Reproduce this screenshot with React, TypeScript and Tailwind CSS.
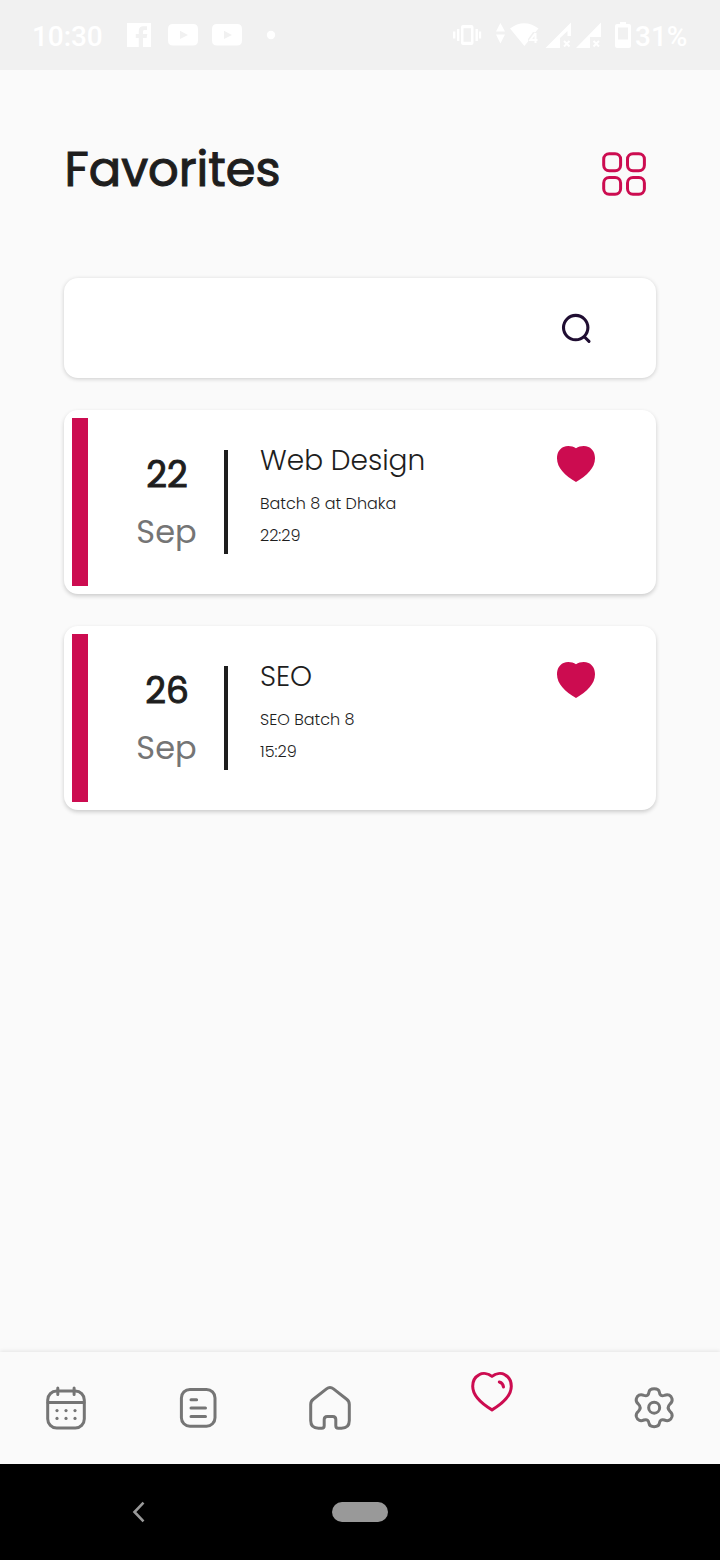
import type { ReactNode } from "react";

type DrawingProps = { box: string; className: string; children: ReactNode };

function Drawing({ box, className, children }: DrawingProps) {
  return (
    <svg viewBox={box} className={`block shrink-0 ${className}`} fill="none" aria-hidden="true">
      {children}
    </svg>
  );
}

function StatusBar() {
  return (
    <header className="flex h-[70px] items-center bg-[#f1f1f1] pt-[2px] font-['Roboto','Noto_Sans',sans-serif] text-[28px] leading-none font-medium text-white">
      <span className="ml-8 w-[95px] pt-[1px] tracking-[-0.1px]">10:30</span>
      <Drawing box="0 0 150 32" className="h-8 w-[150px]">
        <path
          fill="white"
          fillRule="evenodd"
          d="M0 3H24V27H16V18H19.6L20.3 14H16V11.8C16 10.4 16.7 10 18 10H20V6.2H16.8C13.3 6.2 11.8 8 11.8 11.2V14H8.8V18H11.8V27H0Z"
        />
        <path
          fill="white"
          fillRule="evenodd"
          d="M46 4H66Q71 4 71 9V20.5Q71 25.5 66 25.5H46Q41 25.5 41 20.5V9Q41 4 46 4ZM53 10.8V19L61 14.9Z"
        />
        <path
          fill="white"
          fillRule="evenodd"
          d="M90 4H110Q115 4 115 9V20.5Q115 25.5 110 25.5H90Q85 25.5 85 20.5V9Q85 4 90 4ZM97 10.8V19L105 14.9Z"
        />
        <circle cx="144" cy="15" r="4.2" fill="white" />
      </Drawing>
      <Drawing box="450 19 184 34" className="ml-[173px] h-[34px] w-[184px]">
        <g fill="white">
          <path fillRule="evenodd" d="M463 25H471.5Q473.5 25 473.5 27V43Q473.5 45 471.5 45H463Q461 45 461 43V27Q461 25 463 25ZM463.5 28.3V41.7H471V28.3Z" />
          <path d="M457 29H459.4V41H457ZM453 31.5H455.4V38.5H453ZM475.5 29H477.9V41H475.5ZM479 31.5H481.2V38.5H479Z" />
          <path d="M500.4 23L505 31.6H496ZM496 34.6H505L500.4 43.5Z" />
          <path d="M510 28.5Q524 18 538.5 28.5L535.5 32H533L528 39V41.5L524.4 46Z" />
          <path d="M545.5 48L571 22.5V36H567.5V31L560 38V48Z" />
          <path d="M576 48L601 22.5V37H590V48Z" />
          <path fillRule="evenodd" d="M620 22H626V24H629Q631 24 631 26V46Q631 48 629 48H617Q615 48 615 46V26Q615 24 617 24H620ZM618 27.5V39.5H628V27.5Z" />
        </g>
        <path stroke="white" strokeWidth="2" d="M535.5 33L530.3 40H537.5M535.5 33V43M564 41L569.5 46.5M569.5 41L564 46.5M593.5 41L599 46.5M599 41L593.5 46.5" />
      </Drawing>
      <span className="ml-[1px] pt-[1px]">31%</span>
    </header>
  );
}

function GridIcon() {
  return (
    <Drawing box="600 150 48 48" className="h-12 w-12">
      <g stroke="#cc0c50" strokeWidth="3">
        <rect x="603.7" y="153.8" width="16.9" height="16.9" rx="5.5" />
        <rect x="627.5" y="153.8" width="16.9" height="16.9" rx="5.5" />
        <rect x="603.7" y="177.4" width="16.9" height="16.9" rx="5.5" />
        <rect x="627.5" y="177.4" width="16.9" height="16.9" rx="5.5" />
      </g>
    </Drawing>
  );
}

function FilledHeart() {
  return (
    <Drawing box="556 444 40 40" className="mt-[26px] mr-[60px] ml-auto h-10 w-10">
      <path
        fill="#cc0c50"
        d="M576 448.3C572.5 446 567.5 445.2 563.5 447C559 449 557 453.5 557 458.2C557 468 565 475.3 576 482C587 475.3 595 468 595 458.2C595 453.5 593 449 588.5 447C584.5 445.2 579.5 446 576 448.3Z"
      />
    </Drawing>
  );
}

type Event = { day: string; month: string; title: string; place: string; time: string };

const events: Event[] = [
  { day: "22", month: "Sep", title: "Web Design", place: "Batch 8 at Dhaka", time: "22:29" },
  { day: "26", month: "Sep", title: "SEO", place: "SEO Batch 8", time: "15:29" },
];

function EventCard({ event }: { event: Event }) {
  return (
    <article className="flex h-[184px] items-start rounded-[14px] bg-white p-2 pr-0 shadow-[0_2px_4px_rgba(0,0,0,0.19)]">
      <div className="h-[168px] w-4 bg-[#cc0c50]" />
      <div className="ml-[38px] flex w-[81px] flex-col items-center">
        <span className="mt-[37px] ml-[1px] text-[36px] leading-10 font-normal [-webkit-text-stroke:1px_#1e1e1e]">{event.day}</span>
        <span className="mt-[17px] text-[32px] leading-10 text-[#757575]">{event.month}</span>
      </div>
      <div className="mt-8 ml-[17px] h-[104px] w-1 bg-[#1e1e1e]" />
      <div className="mt-[23px] ml-8 flex flex-col whitespace-nowrap">
        <span className="text-[28px] leading-10 font-light">{event.title}</span>
        <span className="mt-[7px] text-base leading-8 font-light">{event.place}</span>
        <span className="text-base leading-8 font-light">{event.time}</span>
      </div>
      <FilledHeart />
    </article>
  );
}

function BottomNav() {
  return (
    <nav className="flex h-28 items-start bg-[#fafafa] text-[#757575] shadow-[0_-1px_4px_rgba(0,0,0,0.09)]">
      <button className="flex w-[132px] justify-center pt-8" aria-label="Calendar">
        <Drawing box="42 1384 48 48" className="h-12 w-12">
          <g stroke="currentColor" strokeWidth="3" strokeLinecap="round">
            <rect x="47.7" y="1391" width="36.6" height="37" rx="9" />
            <path d="M48 1402.5H84M57.8 1388V1394.5M74.1 1388V1394.5" />
          </g>
          <g fill="currentColor">
            <circle cx="57" cy="1410.6" r="1.6" />
            <circle cx="66" cy="1410.6" r="1.6" />
            <circle cx="75" cy="1410.6" r="1.6" />
            <circle cx="57" cy="1418.4" r="1.6" />
            <circle cx="66" cy="1418.4" r="1.6" />
            <circle cx="75" cy="1418.4" r="1.6" />
          </g>
        </Drawing>
      </button>
      <button className="flex w-[132px] justify-center pt-8" aria-label="Notices">
        <Drawing box="174 1384 48 48" className="h-12 w-12">
          <g stroke="currentColor" strokeWidth="3" strokeLinecap="round">
            <rect x="181.4" y="1389.4" width="33.6" height="36.9" rx="8.5" />
            <path d="M191 1399.7H196.6M191 1408H205.5M191 1416.4H205.5" />
          </g>
        </Drawing>
      </button>
      <button className="flex w-[132px] justify-center pt-8" aria-label="Home">
        <Drawing box="306 1384 48 48" className="h-12 w-12">
          <path
            stroke="currentColor"
            strokeWidth="3"
            strokeLinejoin="round"
            d="M318.5 1428.2Q310.7 1428.2 310.7 1420.5V1404.5Q310.7 1401.3 313.3 1399.3L326.5 1388.9Q330 1386.2 333.5 1388.9L346.7 1399.3Q349.3 1401.3 349.3 1404.5V1420.5Q349.3 1428.2 341.5 1428.2H338.3Q335.8 1428.2 335.8 1425.7V1419.4Q335.8 1416.4 332.8 1416.4H327.2Q324.2 1416.4 324.2 1419.4V1425.7Q324.2 1428.2 321.7 1428.2Z"
          />
        </Drawing>
      </button>
      <button className="flex w-48 justify-center pt-4 text-[#cc0c50]" aria-label="Favorites">
        <Drawing box="468 1368 48 48" className="h-12 w-12">
          <g stroke="currentColor" strokeWidth="3" strokeLinecap="round" strokeLinejoin="round">
            <path d="M492 1376.4C488.3 1373.4 483 1372.6 479 1374.8C474.7 1377 472.7 1381.5 472.7 1386.3C472.7 1396 480.8 1403.2 492 1409.9C503.2 1403.2 511.3 1396 511.3 1386.3C511.3 1381.5 509.3 1377 505 1374.8C501 1372.6 495.7 1373.4 492 1376.4Z" />
            <path d="M499.3 1382Q503 1383 503.5 1387" />
          </g>
        </Drawing>
      </button>
      <button className="flex w-[132px] justify-center pt-8" aria-label="Settings">
        <Drawing box="60 72 144 144" className="h-12 w-12">
          <g stroke="currentColor" strokeWidth="9" strokeLinejoin="round">
            <circle cx="132.5" cy="143" r="16.5" />
            <path d="M132.5 86C141 86 147 89 148 96C149 105 154 109 163 106C175 101 183 106 186 116C188 124 185 128 180 132C173 139 173 147 180 154C185 158 188 162 186 170C183 180 175 185 163 180C154 177 149 181 148 190C147 197 141 200 132.5 200C124 200 118 197 117 190C116 181 111 177 102 180C90 185 82 180 79 170C77 162 80 158 85 154C92 147 92 139 85 132C80 128 77 124 79 116C82 106 90 101 102 106C111 109 116 105 117 96C118 89 124 86 132.5 86Z" />
          </g>
        </Drawing>
      </button>
    </nav>
  );
}

export default function App() {
  return (
    <div className="flex h-[1560px] w-[720px] flex-col overflow-hidden bg-[#fafafa] font-['Poppins','Inter',sans-serif] text-[#1e1e1e]">
      <StatusBar />
      <main className="flex flex-1 flex-col px-16">
        <div className="mt-[70px] flex h-[138px] items-start justify-between pr-2">
          <h1 className="ml-[0.6px] text-[48px] leading-[60px] font-normal tracking-[-0.05px] [-webkit-text-stroke:1.05px_#1e1e1e]">Favorites</h1>
          <button className="mt-[10px]" aria-label="Categories">
            <GridIcon />
          </button>
        </div>
        <div className="flex h-[100px] items-center justify-end rounded-[14px] bg-white pr-[60px] shadow-[0_1px_4px_rgba(0,0,0,0.19)]">
          <Drawing box="556 308 40 40" className="h-10 w-10">
            <g stroke="#200e32" strokeWidth="3.1" strokeLinecap="round">
              <circle cx="575.7" cy="327.6" r="12.2" />
              <path d="M584.6 337L589 341.3" />
            </g>
          </Drawing>
        </div>
        <section className="mt-8 flex flex-col gap-8">
          {events.map((event) => (
            <EventCard key={event.day} event={event} />
          ))}
        </section>
      </main>
      <BottomNav />
      <footer className="flex h-24 items-center bg-black">
        <Drawing box="130 1500 20 24" className="ml-[130px] h-6 w-5">
          <path stroke="#999999" strokeWidth="2.6" d="M143.5 1502.7L134.5 1512L143.5 1521.3" />
        </Drawing>
        <div className="ml-[182px] h-5 w-14 rounded-full bg-[#999999]" />
      </footer>
    </div>
  );
}
